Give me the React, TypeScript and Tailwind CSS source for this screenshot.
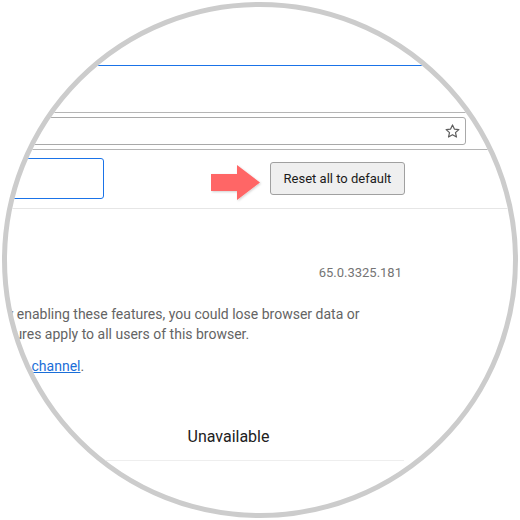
import React from 'react';

const StarIcon = () => (
  <svg width="15" height="14" viewBox="0 0 24 23" fill="none" stroke="#5f5f5f" strokeWidth="2" strokeLinejoin="round">
    <path d="M12 1.5l3.1 6.9 7.4.7-5.6 5 1.7 7.3L12 17.6l-6.6 3.8 1.7-7.3-5.6-5 7.4-.7z" />
  </svg>
);

const Arrow = () => (
  <svg width="52" height="38" viewBox="0 0 52 38" className="shrink-0">
    <defs>
      <filter id="sh" x="-20%" y="-20%" width="140%" height="140%">
        <feDropShadow dx="1" dy="1" stdDeviation="1" floodColor="#000" floodOpacity="0.18" />
      </filter>
    </defs>
    <path d="M0 9h26V0l23 17.5L26 35v-9H0z" fill="#ff6666" filter="url(#sh)" />
  </svg>
);

export default function App() {
  return (
    <div className="w-[520px] h-[520px] bg-white p-[2px]" style={{ fontFamily: 'Roboto, "Liberation Sans", sans-serif' }}>
      <div className="w-[516px] h-[516px] rounded-full border-[5px] border-[#cccccc] overflow-hidden bg-white">
        {/* browser chrome */}
        <div className="mt-[58px] h-px bg-[#1a73e8]" />
        <div className="mt-[46px] h-px bg-[#b5b5b5]" />
        <div className="mt-[4px] flex">
          <div className="ml-[-20px] w-[479px] h-[28px] border border-[#a9a9a9] rounded-[3px] flex items-center justify-end pr-[5px]">
            <StarIcon />
          </div>
        </div>
        <div className="mt-[4px] h-px bg-[#b5b5b5]" />

        {/* flags header */}
        <div className="mt-[8px] h-[41px] flex items-start">
          <div className="ml-[-100px] w-[197px] h-[41px] border border-[#1a73e8] rounded-[3px] shrink-0" />
          <div className="ml-[107px] mt-[7px] h-[34px]">
            <Arrow />
          </div>
          <button className="ml-[7px] mt-[4px] w-[135px] h-[33px] shrink-0 bg-[#efefef] border border-[#a0a0a0] rounded-[3px] text-[13px] text-[#1b1b1b]">
            Reset all to default
          </button>
        </div>
        <div className="mt-[9px] h-px bg-[#e6e6e6]" />

        {/* main column */}
        <div className="ml-[-305px] w-[702px]">
          <div className="mt-[54px] flex justify-end pr-[2px] text-[13px] leading-[20px] text-[#757575]">
            65.0.3325.181
          </div>
          <div className="mt-[21px] ml-[-4px] text-[14px] leading-[20px] text-[#646464] whitespace-nowrap">
            <div>
              <span className="font-bold text-[#c53929]">WARNING: EXPERIMENTAL FEATURES AHEAD!</span> By enabling these features, you could lose browser data or
            </div>
            <div className="ml-[7px]">compromise your security or privacy. Enabled features apply to all users of this browser.</div>
            <div className="mt-[12px] ml-[2px]">
              Interested in cool new Chrome features? Try our{' '}
              <a className="text-[#1a6ed8] underline">beta channel</a>.
            </div>
          </div>
          <div className="mt-[49px] grid grid-cols-2 border-b border-[#eeeeee]">
            <div className="text-center text-[16px] leading-[24px] pb-[11px] text-[#5f6368]">Available</div>
            <div className="text-center text-[16px] leading-[24px] pb-[11px] text-[#212121]">Unavailable</div>
          </div>
        </div>
      </div>
    </div>
  );
}
